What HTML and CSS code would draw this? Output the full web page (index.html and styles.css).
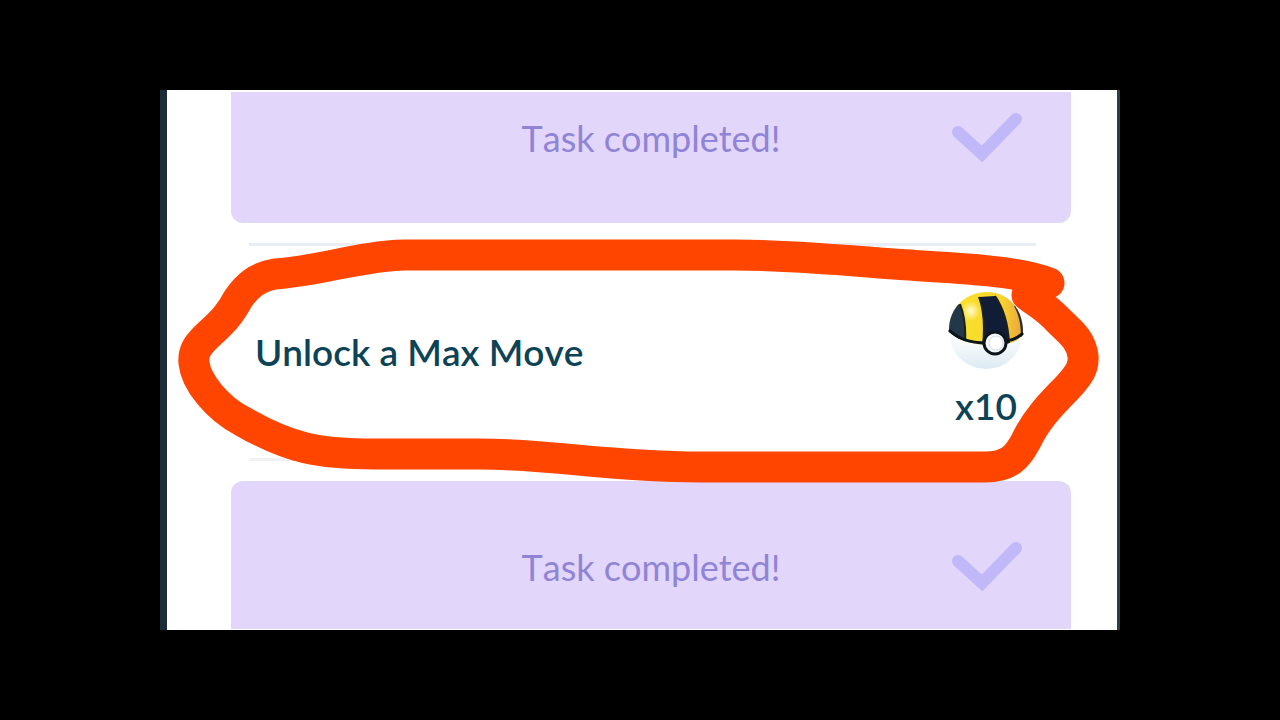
FILE: index.html
```
<!doctype html>
<html lang="en">
<head>
<meta charset="utf-8">
<title>Tasks</title>
<link rel="stylesheet" href="styles.css">
</head>

<body>
<main class="screen">
	<section class="card card-first">
		<p class="done">Task completed!</p>
		<svg class="check" viewBox="0 0 72 50" aria-hidden="true"><path d="M7 20 31 42 65 7"/></svg>
	</section>

	<section class="task">
		<h2 class="task-name">Unlock a Max Move</h2>
		<div class="reward">
			<svg class="ball" viewBox="0 0 76 78" aria-hidden="true">
				<defs>
					<clipPath id="top"><path d="M1 40C0 16 18 0 39 0c21 0 37 17 36 43-6 7-14 9-24 10C33 54 13 51 1 40z"/></clipPath>
					<linearGradient id="shell" x1="0" y1="0" x2="0" y2="1">
						<stop offset="0.6" stop-color="#fafcfd"/>
						<stop offset="1" stop-color="#dceaf3"/>
					</linearGradient>
					<linearGradient id="gold" x1="0" y1="0" x2="1" y2="0">
						<stop offset="0.2" stop-color="#f9e02c"/>
						<stop offset="0.7" stop-color="#f8d52c"/>
						<stop offset="1" stop-color="#e9a040"/>
					</linearGradient>
					<radialGradient id="shine">
						<stop offset="0" stop-color="#fffbd0"/>
						<stop offset="1" stop-color="#fffbd0" stop-opacity="0"/>
					</radialGradient>
				</defs>
				<circle cx="38" cy="40" r="37" fill="url(#shell)"/>
				<g clip-path="url(#top)">
					<path d="M0 0h76v60H0z" fill="url(#gold)"/>
					<ellipse cx="23" cy="19" rx="9" ry="10" fill="url(#shine)"/>
					<path d="M0 50V14l12-2c4 10 6 24 5 40z" fill="#22384a"/>
					<path d="M31 5 47 4c9 14 14 28 14 52H35C37 34 36 18 31 5z" fill="#111d37"/>
					<path d="M66 14c5 9 7 18 7 32h4V12z" fill="#22303a"/>
					<path d="M12 12c4 10 6 24 5 40M31 5c5 13 6 29 4 49M47 4c9 13 13 27 14 47" class="seam"/>
				</g>
				<path d="M1 38c9 9 22 13 37 13M58 49c7-1 13-4 17-8" class="belt"/>
				<circle cx="47" cy="51" r="11" fill="#f4f8fa" stroke="#0c141c" stroke-width="3"/>
				<circle cx="48" cy="51" r="7" fill="#fff" stroke="#d3dce2"/>
			</svg>
			<span class="amount">x10</span>
		</div>
	</section>

	<section class="card card-last">
		<p class="done">Task completed!</p>
		<svg class="check" viewBox="0 0 72 50" aria-hidden="true"><path d="M7 20 31 42 65 7"/></svg>
	</section>

	<!-- hand drawn ring around the open task -->
	<svg class="marker" viewBox="160 90 960 540" aria-hidden="true">
		<path d="M1049 283C1020 272 980 270 940 267C870 263 800 255 735 255H405C360 256 320 271 275 274C257 277 247 286 238 299C229 316 222 322 206 337C197 346 193 352 194 363C196 382 217 408 242 421C290 449 320 454 375 454H480C550 454 610 467 700 467H985C1010 467 1018 456 1026 441C1036 420 1050 405 1067 388C1080 374 1084 367 1083 356C1081 339 1069 331 1058 320C1047 308 1036 302 1027 295"/>
	</svg>
</main>
</body>
</html>
```
FILE: styles.css
```
*{margin:0; padding:0; box-sizing:border-box;}
body{min-height:100vh; padding:90px 12.5%; background:#000; font-family:Lato, "Open Sans", sans-serif; font-size:36px; line-height:44px; font-kerning:none;}
.screen{position:relative; padding:2px 46px 1px 64px; background:#fff; border-left:7px solid #1d2c38; border-right:3px solid #2a4048; overflow:hidden;}

.card{display:grid; grid-template-columns:1fr auto 1fr; align-items:start; padding-right:48px; padding-left:48px; background:#e2d7fa;}
.card-first{padding-top:24px; padding-bottom:61px; border-radius:0 0 12px 12px;}
.card-last{padding-top:64px; padding-bottom:38px; border-radius:12px 12px 0 0;}
.done{grid-column:2; color:#9084d6;}
.check{justify-self:end; width:72px; height:50px; margin-top:-4px; fill:none; stroke:#c1b8fa; stroke-width:12px; stroke-linecap:round;}

.task{display:flex; align-items:center; justify-content:space-between; height:218px; margin:20px 35px 20px 18px; padding:0 12px 0 6px; border-top:3px solid #e9edf6; border-bottom:3px solid #f1f1f4; color:#0d4356; font-size:37px; font-weight:600;}
.task-name{font-size:37px; font-weight:600;}
.reward{display:flex; flex-direction:column; align-items:center; gap:14px; padding-top:16px;}
.ball{display:block; width:76px; height:78px;}
.seam{fill:none; stroke:#1b2020; stroke-width:2px;}
.belt{fill:none; stroke:#0c141c; stroke-width:3px;}

.marker{position:absolute; top:0; left:-7px; width:calc(100% + 10px); height:100%; fill:none; stroke:#ff4500; stroke-width:31px; stroke-linecap:round; stroke-linejoin:round;}
```
